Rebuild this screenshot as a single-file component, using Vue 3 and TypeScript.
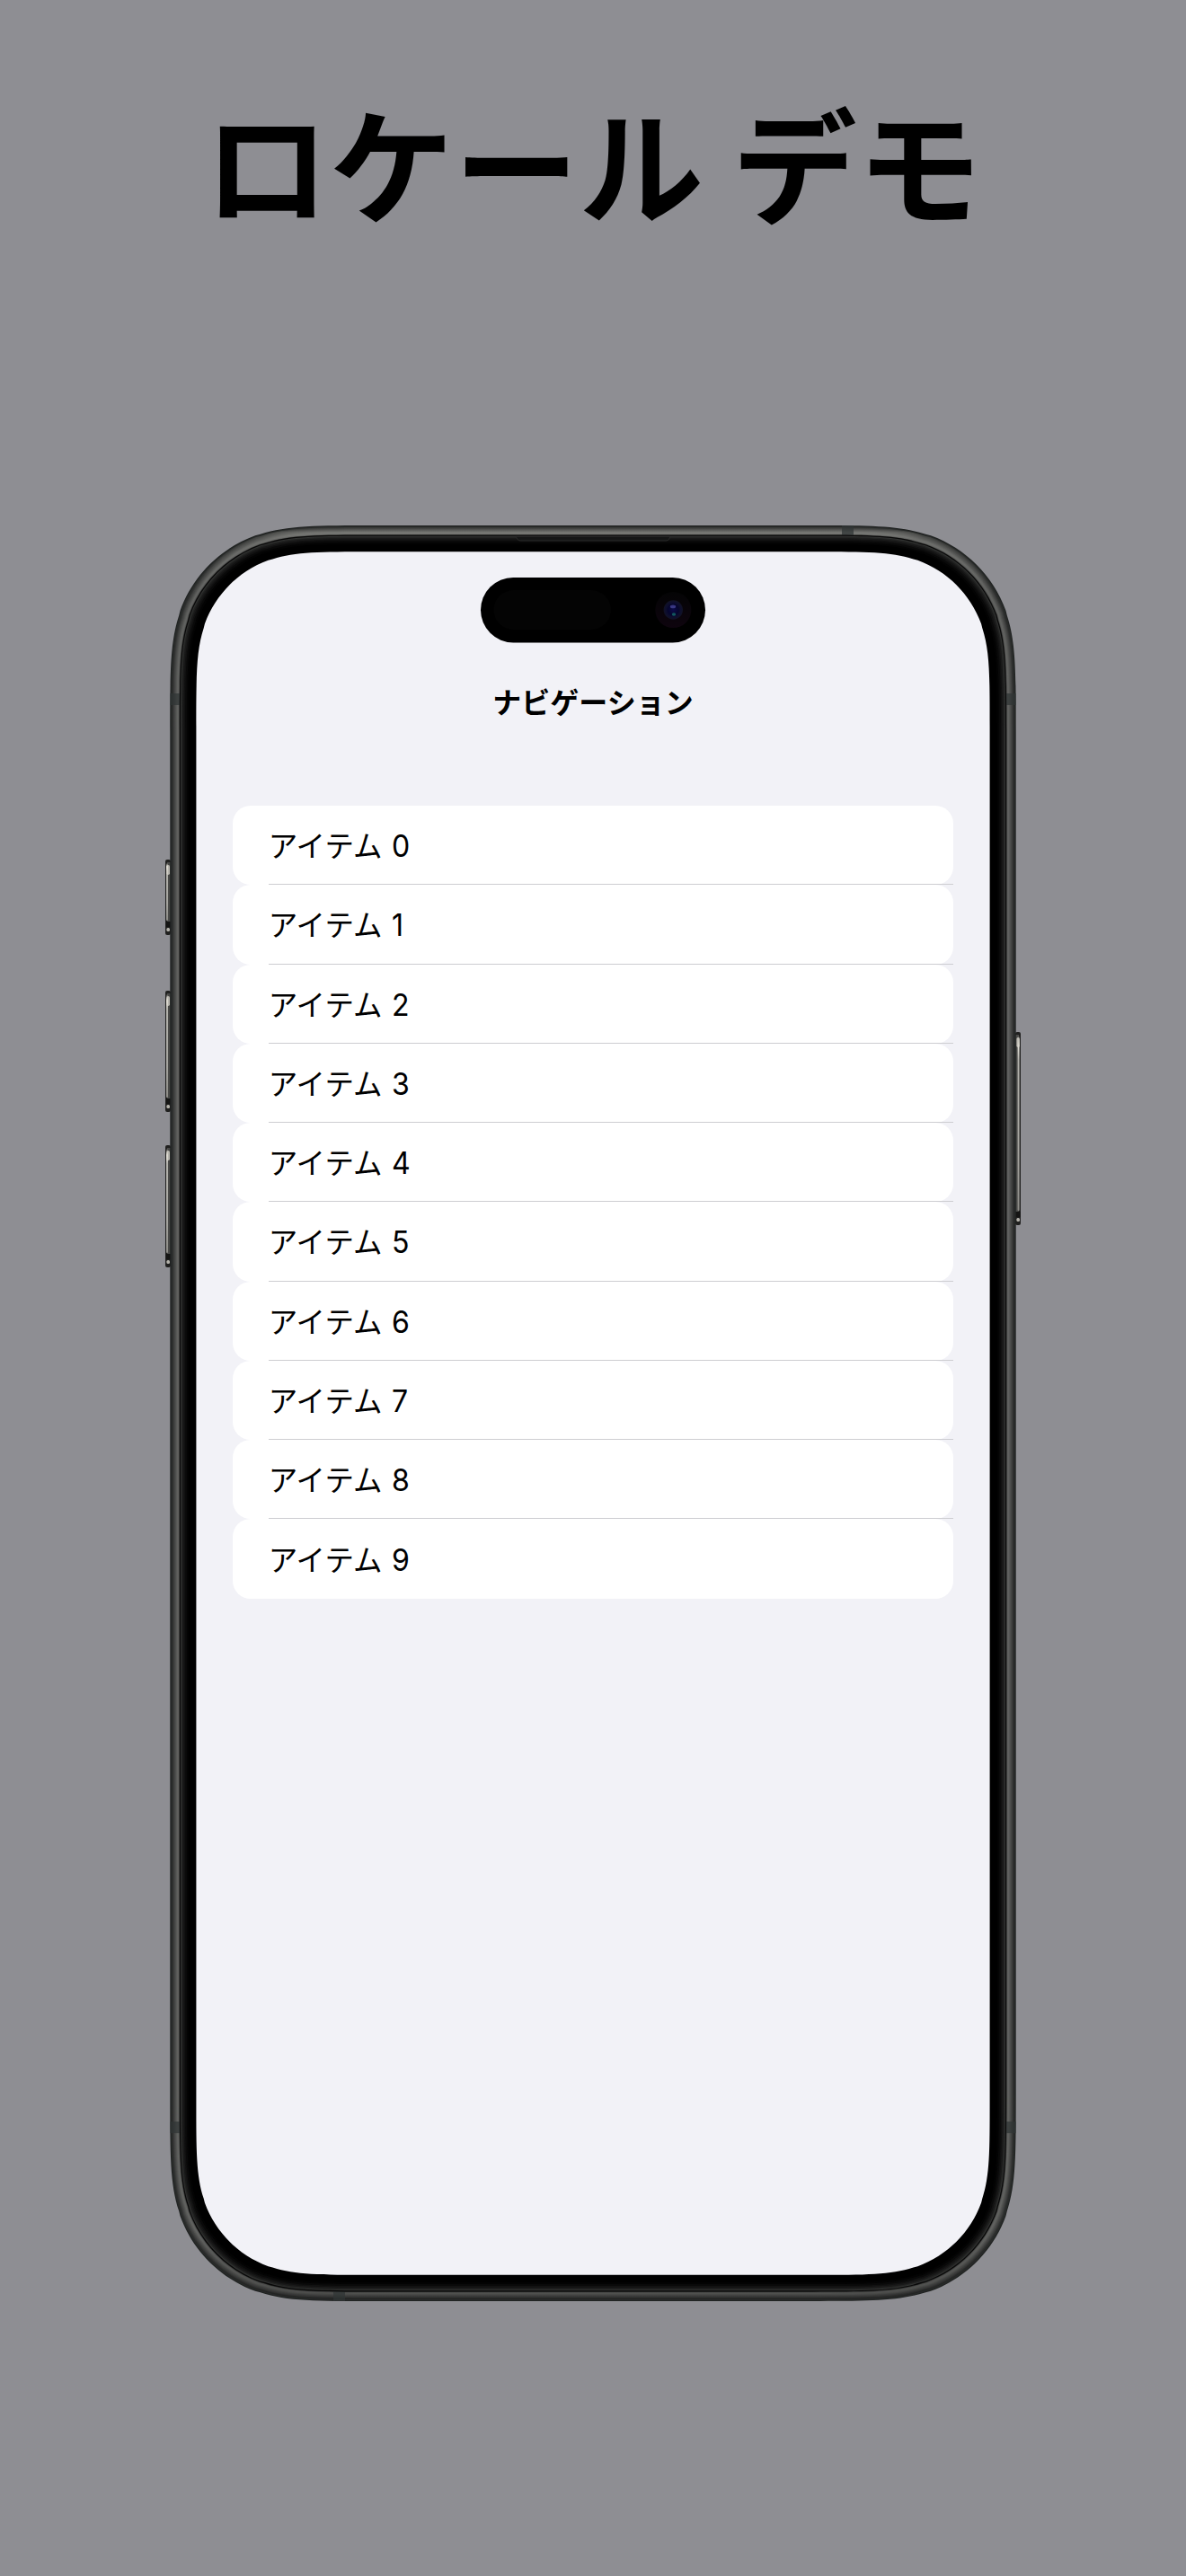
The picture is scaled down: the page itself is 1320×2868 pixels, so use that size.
<script setup lang="ts">
interface Layer { d: string; fill: string }
interface SideButton { x: number; y: number; h: number; right: boolean }

const headline = 'ロケール デモ'
const items: number[] = Array.from({ length: 10 }, (_, i) => i)

// Device outline in page units, relative to the device box (952 x 1977)
const outer = { x: 5.3, y: 0, w: 941.4, h: 1977 }

// Rounded rectangle with continuous-curvature corners
function squircle(x: number, y: number, w: number, h: number, r: number): string {
  const pts = [[1.5287, 0], [1.0885, 0], [0.8684, 0], [0.6699, 0.0655], [0.6315, 0.0749],
    [0.3728, 0.1691], [0.1691, 0.3728], [0.0749, 0.6315], [0.0655, 0.6699],
    [0, 0.8684], [0, 1.0885], [0, 1.5287]]
  const corner = (cx: number, cy: number, sx: number, sy: number, rev: boolean): string => {
    const p = (rev ? [...pts].reverse() : pts).map(([a, b]) => `${(cx + sx * a * r).toFixed(2)} ${(cy + sy * b * r).toFixed(2)}`)
    return `${p[0]} C${p[1]} ${p[2]} ${p[3]} L${p[4]} C${p[5]} ${p[6]} ${p[7]} L${p[8]} C${p[9]} ${p[10]} ${p[11]}`
  }
  return `M${corner(x, y, 1, 1, true)} L${corner(x + w, y, -1, 1, false)} L${corner(x + w, y + h, -1, -1, true)} L${corner(x, y + h, 1, -1, false)}Z`
}

function inset(n: number): string {
  return squircle(outer.x + n, outer.y + n, outer.w - 2 * n, outer.h - 2 * n, 150 - n * 0.8)
}

const metal: Layer[] = ([[0, '#202322'], [1, '#292b2a'], [2, '#2b2d2c'], [3, '#353635'], [4, '#404140'],
  [5, '#484948'], [6, '#525351'], [7, '#5b5c5a'], [8, '#626361'], [9, '#5b5c5a'], [10, '#3a3b3a']] as [number, string][])
  .map(([n, fill]) => ({ d: inset(n), fill }))
const bezel: Layer[] = ([[10.6, '#080808'], [11.7, '#303130'], [12.7, '#222322'], [14, '#191919'],
  [15.5, '#111111'], [17, '#090909'], [19, '#030303'], [21, '#000000']] as [number, string][])
  .map(([n, fill]) => ({ d: inset(n), fill }))
const screenPath = squircle(34.4, 29.2, 883.2, 1918.6, 127)

const buttons: SideButton[] = [
  { x: 0, y: 372, h: 84, right: false },
  { x: 0, y: 518, h: 135, right: false },
  { x: 0, y: 690, h: 136, right: false },
  { x: 946, y: 564, h: 215, right: true },
]
const bands = [
  { x: 753, y: 0, w: 13, h: 10.6 },
  { x: 187, y: 1966.4, w: 13, h: 10.6 },
  { x: 5.3, y: 187, w: 10.6, h: 13 },
  { x: 936.1, y: 187, w: 10.6, h: 13 },
  { x: 5.3, y: 1777, w: 10.6, h: 13 },
  { x: 936.1, y: 1777, w: 10.6, h: 13 },
]
</script>

<template>
  <main class="poster">
    <h1 class="headline">{{ headline }}</h1>
    <section class="device">
      <svg class="frame" viewBox="0 0 952 1977" width="952" height="1977" aria-hidden="true">
        <defs>
          <linearGradient id="btn" x1="0" y1="0" x2="0" y2="1">
            <stop offset="0" stop-color="#bdbcb4" stop-opacity="0.1" />
            <stop offset="0.06" stop-color="#e4e2d9" />
            <stop offset="0.14" stop-color="#b4b3ad" />
            <stop offset="0.7" stop-color="#a5a49f" />
            <stop offset="1" stop-color="#8d8c87" />
          </linearGradient>
          <linearGradient id="shine" gradientUnits="userSpaceOnUse" x1="0" y1="0" x2="0" y2="1977">
            <stop offset="0" stop-color="#c8c8c0" stop-opacity="0.05" />
            <stop offset="0.002" stop-color="#c8c8c0" stop-opacity="0.1" />
            <stop offset="0.004" stop-color="#c8c8c0" stop-opacity="0.22" />
            <stop offset="0.008" stop-color="#c8c8c0" stop-opacity="0.13" />
            <stop offset="0.04" stop-color="#c8c8c0" stop-opacity="0" />
            <stop offset="0.96" stop-color="#000" stop-opacity="0" />
            <stop offset="1" stop-color="#000" stop-opacity="0.22" />
          </linearGradient>
          <radialGradient id="lens">
            <stop offset="0" stop-color="#0c0a4a" />
            <stop offset="0.55" stop-color="#06062c" />
            <stop offset="0.75" stop-color="#0e0e2e" />
            <stop offset="1" stop-color="#111225" />
          </radialGradient>
          <linearGradient id="halo" x1="0" y1="0" x2="0" y2="1">
            <stop offset="0" stop-color="#040405" />
            <stop offset="1" stop-color="#0e040e" />
          </linearGradient>
        </defs>
        <g v-for="b in buttons" :key="b.y">
          <rect :x="b.x" :y="b.y" width="6" :height="b.h" rx="2" fill="#20201f" />
          <rect :x="b.right ? b.x : b.x + 2" :y="b.y + 3" width="4" :height="b.h - 18" fill="#494947" />
          <rect :x="b.right ? b.x + 2.6 : b.x + 1" :y="b.y + 4" width="2" :height="b.h - 20" rx="1" fill="url(#btn)" />
          <rect :x="b.x + 1.4" :y="b.y + 6" width="3.6" height="11" rx="1.8" fill="#d9d7ce" opacity="0.75" />
          <rect :x="b.x + 1" :y="b.y + b.h - 15" width="4.6" height="6" fill="#151514" />
          <rect :x="b.x + 1.4" :y="b.y + b.h - 8" width="3.6" height="4" rx="1.5" fill="#b4b2ab" />
        </g>
        <path v-for="(l, i) in metal" :key="'m' + i" :d="l.d" :fill="l.fill" />
        <path :d="metal[2].d" fill="url(#shine)" />
        <rect v-for="(b, i) in bands" :key="'b' + i" :x="b.x" :y="b.y" :width="b.w" :height="b.h" fill="#303536" opacity="0.75" />
        <path v-for="(l, i) in bezel" :key="'z' + i" :d="l.d" :fill="l.fill" />
        <path d="M390 12.3 L392 15.5 Q393 17 395.5 17 H557 Q559.5 17 560.5 15.5 L562 12.3Z" fill="#151616" stroke="#2d2e2d" stroke-width="0.9" />
        <path :d="screenPath" fill="#f2f2f7" />
        <rect x="351" y="58" width="250" height="72.4" rx="36.2" fill="#000" />
        <rect x="365.5" y="72" width="130.5" height="44" rx="22" fill="#040404" />
        <circle cx="565.3" cy="94" r="20" fill="url(#halo)" />
        <circle cx="565.3" cy="94" r="10.7" fill="url(#lens)" />
        <ellipse cx="565" cy="90.4" rx="3.2" ry="1.8" fill="#4a489c" opacity="0.75" />
        <ellipse cx="566" cy="99" rx="2.2" ry="1.7" fill="#12585e" />
      </svg>
      <div class="screen">
        <h2 class="nav-title">ナビゲーション</h2>
        <ul class="list">
          <li v-for="n in items" :key="n" class="row">
            <span class="label">アイテム</span><span class="digit">{{ n }}</span>
          </li>
        </ul>
      </div>
    </section>
  </main>
</template>

<style>
body {
  margin: 0;
  background: #8e8e93;
}
</style>

<style scoped>
.poster {
  width: 1320px;
  height: 2868px;
  box-sizing: border-box;
  overflow: hidden;
  display: flex;
  flex-direction: column;
  align-items: center;
  background: #8e8e93;
  color: #000;
  font-family: Inter, "Noto Sans CJK JP", sans-serif;
}
.headline {
  margin: 0;
  height: 585px;
  box-sizing: border-box;
  padding-top: 76px;
  font: 700 139px/206px "Noto Sans CJK JP", sans-serif;
  white-space: nowrap;
}
.device {
  position: relative;
  width: 952px;
  height: 1977px;
  flex: none;
}
.frame {
  position: absolute;
  inset: 0;
  display: block;
}
.screen {
  position: relative;
  box-sizing: border-box;
  height: 100%;
  padding: 171px 75px 0;
}
.nav-title {
  margin: 0;
  height: 141px;
  text-align: center;
  font: 700 32px/48px "Noto Sans CJK JP", sans-serif;
}
.list {
  margin: 0;
  padding: 0;
  list-style: none;
}
.row {
  position: relative;
  display: flex;
  align-items: center;
  box-sizing: border-box;
  height: 88.27px;
  padding-left: 39.7px;
  border-radius: 20px;
  background: #fff;
}
.row:not(:last-child)::after {
  content: "";
  position: absolute;
  left: 40px;
  right: 0;
  bottom: 0;
  height: 1px;
  background: #cdcdd1;
}
.label {
  width: 137px;
  font: 400 32.5px/48px "Noto Sans CJK JP", sans-serif;
  transform: translateY(-1px);
}
.digit {
  font: 400 34.5px/48px Inter, sans-serif;
  transform: translateY(0.5px) scaleX(0.93);
  transform-origin: left;
}
</style>
